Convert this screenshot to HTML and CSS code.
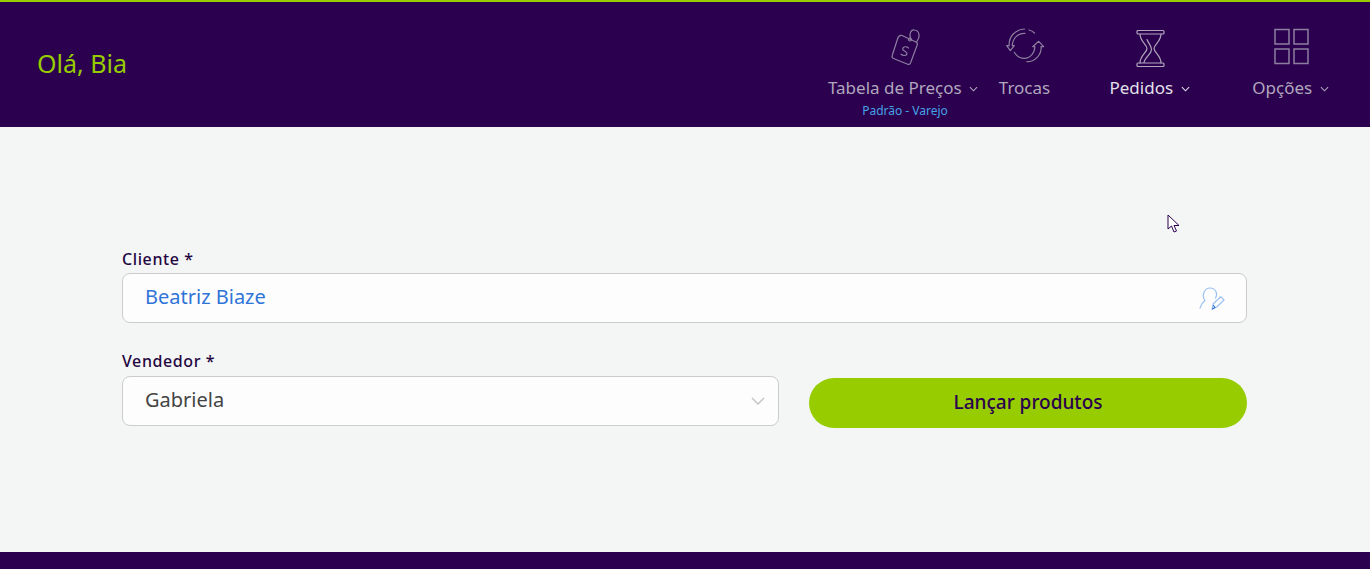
FILE: index.html
```html
<!DOCTYPE html>
<html lang="pt-BR">
<head>
    <meta charset="UTF-8">
    <meta name="viewport" content="width=device-width, initial-scale=1.0">
    <title>Pedidos</title>
    <link rel="stylesheet" href="styles.css">
</head>
<body>
    <header class="topbar">
        <div class="greeting">Olá, Bia</div>
        <nav class="menu">
            <a class="menu-item item-precos">
                <svg class="menu-icon" viewBox="0 0 40 40" width="40" height="40" fill="none" stroke="currentColor" stroke-width="1.2" stroke-linecap="round" stroke-linejoin="round">
                    <g transform="translate(2 0)">
                        <path d="M16 8.500 L30 15 Q32 16 31.200 18 L24.500 36 Q23.700 38 21.700 37.200 L7.500 31.500 Q5.500 30.500 6.200 28.500 L11.500 12 Q13 7.500 16 8.500 Z"/>
                        <circle cx="24" cy="12.500" r="1.500"/>
                        <path d="M24.500 11 C23 6 25 2.500 28.500 3 C33 3.500 35 9 30.500 15"/>
                        <path d="M22.500 21 C20.500 19 17 19.500 16.700 21.700 C16.400 24.500 21.500 24 21 26.800 C20.600 29 17 29 15 27.300"/>
                    </g>
                </svg>
                <span class="menu-label">Tabela de Preços <svg class="chevron" viewBox="0 0 10 6" width="9" height="6"><path d="M1 1 L5 5 L9 1"/></svg></span>
                <span class="menu-sub">Padrão - Varejo</span>
            </a>
            <a class="menu-item item-trocas">
                <svg class="menu-icon" viewBox="0 0 40 40" width="40" height="40" fill="none" stroke="currentColor" stroke-width="1.2" stroke-linecap="round" stroke-linejoin="round">
                    <path d="M19.500 2 C10 2.500 3.500 10 4.200 18.700 L1.700 18.700 L5.300 23.700 L9.300 18.700 L7.300 18.700 C7.500 11.500 13 6 20 6.300"/>
                    <path d="M36.200 19.700 L38.700 19.700 L33.700 14.300 L27.700 19.700 L29.800 19.700 C30 26 25 31.300 19.300 31.300 C15 31.300 11.500 29 9.300 25.300"/>
                    <path d="M36.200 19.700 C36.500 28 30 34.700 22 34.700"/>
                    <path d="M24 3 C26 3.500 28 4.500 29.500 6"/>
                </svg>
                <span class="menu-label">Trocas</span>
            </a>
            <a class="menu-item item-pedidos">
                <svg class="menu-icon" viewBox="0 0 40 40" width="40" height="40" fill="none" stroke="currentColor" stroke-width="1.2" stroke-linecap="round" stroke-linejoin="round">
                    <g transform="translate(1 1.500)">
                        <rect x="6" y="2" width="27" height="3.500" rx="1"/>
                        <rect x="6" y="34.500" width="27" height="3.500" rx="1"/>
                        <path d="M9 5.500 C9 13 16 16 16 20 C16 24 9 27 9 34.500"/>
                        <path d="M30 5.500 C30 13 23 16 23 20 C23 24 30 27 30 34.500"/>
                        <path d="M16 11 C18 16 22 19 20 23 C19 26 14 29 13 34"/>
                    </g>
                </svg>
                <span class="menu-label">Pedidos <svg class="chevron" viewBox="0 0 10 6" width="9" height="6"><path d="M1 1 L5 5 L9 1"/></svg></span>
            </a>
            <a class="menu-item item-opcoes">
                <svg class="menu-icon" viewBox="0 0 40 40" width="40" height="40" fill="none" stroke="currentColor" stroke-width="1.500">
                    <rect x="4" y="2.500" width="14" height="14.500"/>
                    <rect x="23" y="2.500" width="14" height="14.500"/>
                    <rect x="4" y="22" width="14" height="14.500"/>
                    <rect x="23" y="22" width="14" height="14.500"/>
                </svg>
                <span class="menu-label">Opções <svg class="chevron" viewBox="0 0 10 6" width="9" height="6"><path d="M1 1 L5 5 L9 1"/></svg></span>
            </a>
        </nav>
    </header>

    <main class="content">
        <div class="field">
            <label class="field-label">Cliente *</label>
            <div class="input">
                <span class="input-client">Beatriz Biaze</span>
                <svg class="client-icon" viewBox="0 0 28 26" width="28" height="26" fill="none" stroke="#9cc1f2" stroke-width="1.200" stroke-linecap="round" stroke-linejoin="round">
                    <path d="M2 23 C3 19 5 17 7 15.500 C3.500 11 6 3 12 3 C18 3 20 9 17.500 13"/>
                    <path d="M14.300 24 L15 19 L22.700 11.700 L26 15 L18.700 22 Z"/>
                    <path d="M14.300 24 L17 22.500 L15.500 20.500" stroke="#2f74d8"/>
                </svg>
            </div>
        </div>
        <div class="row">
            <div class="field field-seller">
                <label class="field-label">Vendedor *</label>
                <div class="input">
                    <span class="input-seller">Gabriela</span>
                    <svg class="select-arrow" viewBox="0 0 14 8" width="14" height="8"><path d="M1 1 L7 7 L13 1"/></svg>
                </div>
            </div>
            <button class="btn-launch">Lançar produtos</button>
        </div>
        <svg class="cursor" viewBox="0 0 14 20" width="14" height="20">
            <path d="M1 1 L1 15 L4.500 12 L7 18 L9.500 17 L7 11.500 L12 11.500 Z" fill="#fff" stroke="#2b004f" stroke-width="1"/>
        </svg>
    </main>

    <footer class="footer"></footer>
</body>
</html>
```

FILE: styles.css
```css
* {
    box-sizing: border-box;
}
html, body {
    height: 100%;
}
body {
    margin: 0;
    display: flex;
    flex-direction: column;
    background-color: #f4f6f6;
    font-family: "Noto Sans", Arial, sans-serif;
    overflow: hidden;
}
.topbar {
    height: 127px;
    display: flex;
    justify-content: space-between;
    background: #2b004f;
    border-top: 2px solid #96cc00;
}
.greeting {
    padding: 45px 0 0 37px;
    font-size: 25px;
    line-height: 32px;
    color: #96cc00;
}
.menu {
    display: flex;
    padding-right: 27px;
}
.menu-item {
    display: flex;
    flex-direction: column;
    align-items: center;
    padding-top: 25px;
    color: #b0a6bd;
}
.item-precos { width: 168px; }
.item-trocas { width: 73px; }
.item-pedidos { width: 177px; color: #e3e0ea; }
.item-opcoes { width: 105px; }
.menu-icon {
    display: block;
    color: #8d7ea0;
}
.item-pedidos .menu-icon {
    color: #b0a6bd;
}
.menu-label {
    margin-top: 9px;
    font-size: 17px;
    line-height: 24px;
    white-space: nowrap;
}
.item-precos .menu-label {
    margin-left: -2px;
}
.chevron {
    margin-left: 3px;
    vertical-align: 2px;
    fill: none;
    stroke: currentColor;
    stroke-width: 1.2;
}
.menu-sub {
    font-size: 12px;
    line-height: 16px;
    margin: 3px 0 0 2px;
    color: #45a3e6;
}
.content {
    flex: 1;
    position: relative;
    padding: 122px 123px 0 122px;
}
.field-label {
    display: block;
    font-size: 16px;
    letter-spacing: 0.6px;
    line-height: 21px;
    font-weight: 500;
    color: #24063f;
    margin-bottom: 3px;
}
.field-seller .field-label {
    margin-bottom: 4px;
}
.input {
    height: 50px;
    display: flex;
    align-items: center;
    justify-content: space-between;
    padding: 0 22px;
    background: #fdfdfd;
    border: 1px solid #cccccc;
    border-radius: 8px;
    font-size: 20px;
    line-height: 26px;
}
.input-client {
    color: #2f74d8;
    margin-top: -2px;
}
.input-seller {
    color: #444444;
    margin-top: -2px;
}
.client-icon {
    margin-right: -2px;
}
.select-arrow {
    margin-right: -9px;
    fill: none;
    stroke: #c4c4c4;
    stroke-width: 1.4;
}
.row {
    display: flex;
    align-items: flex-end;
    margin-top: 28px;
}
.field-seller {
    width: 657px;
}
.btn-launch {
    width: 438px;
    height: 50px;
    margin-left: 30px;
    margin-bottom: -2px;
    padding-bottom: 3px;
    border: none;
    border-radius: 25px;
    background: #96cc00;
    color: #2b004f;
    font-family: inherit;
    font-size: 19px;
    font-weight: 500;
}
.cursor {
    position: absolute;
    left: 1167px;
    top: 87px;
}
.footer {
    height: 17px;
    background: #2b004f;
}
```
